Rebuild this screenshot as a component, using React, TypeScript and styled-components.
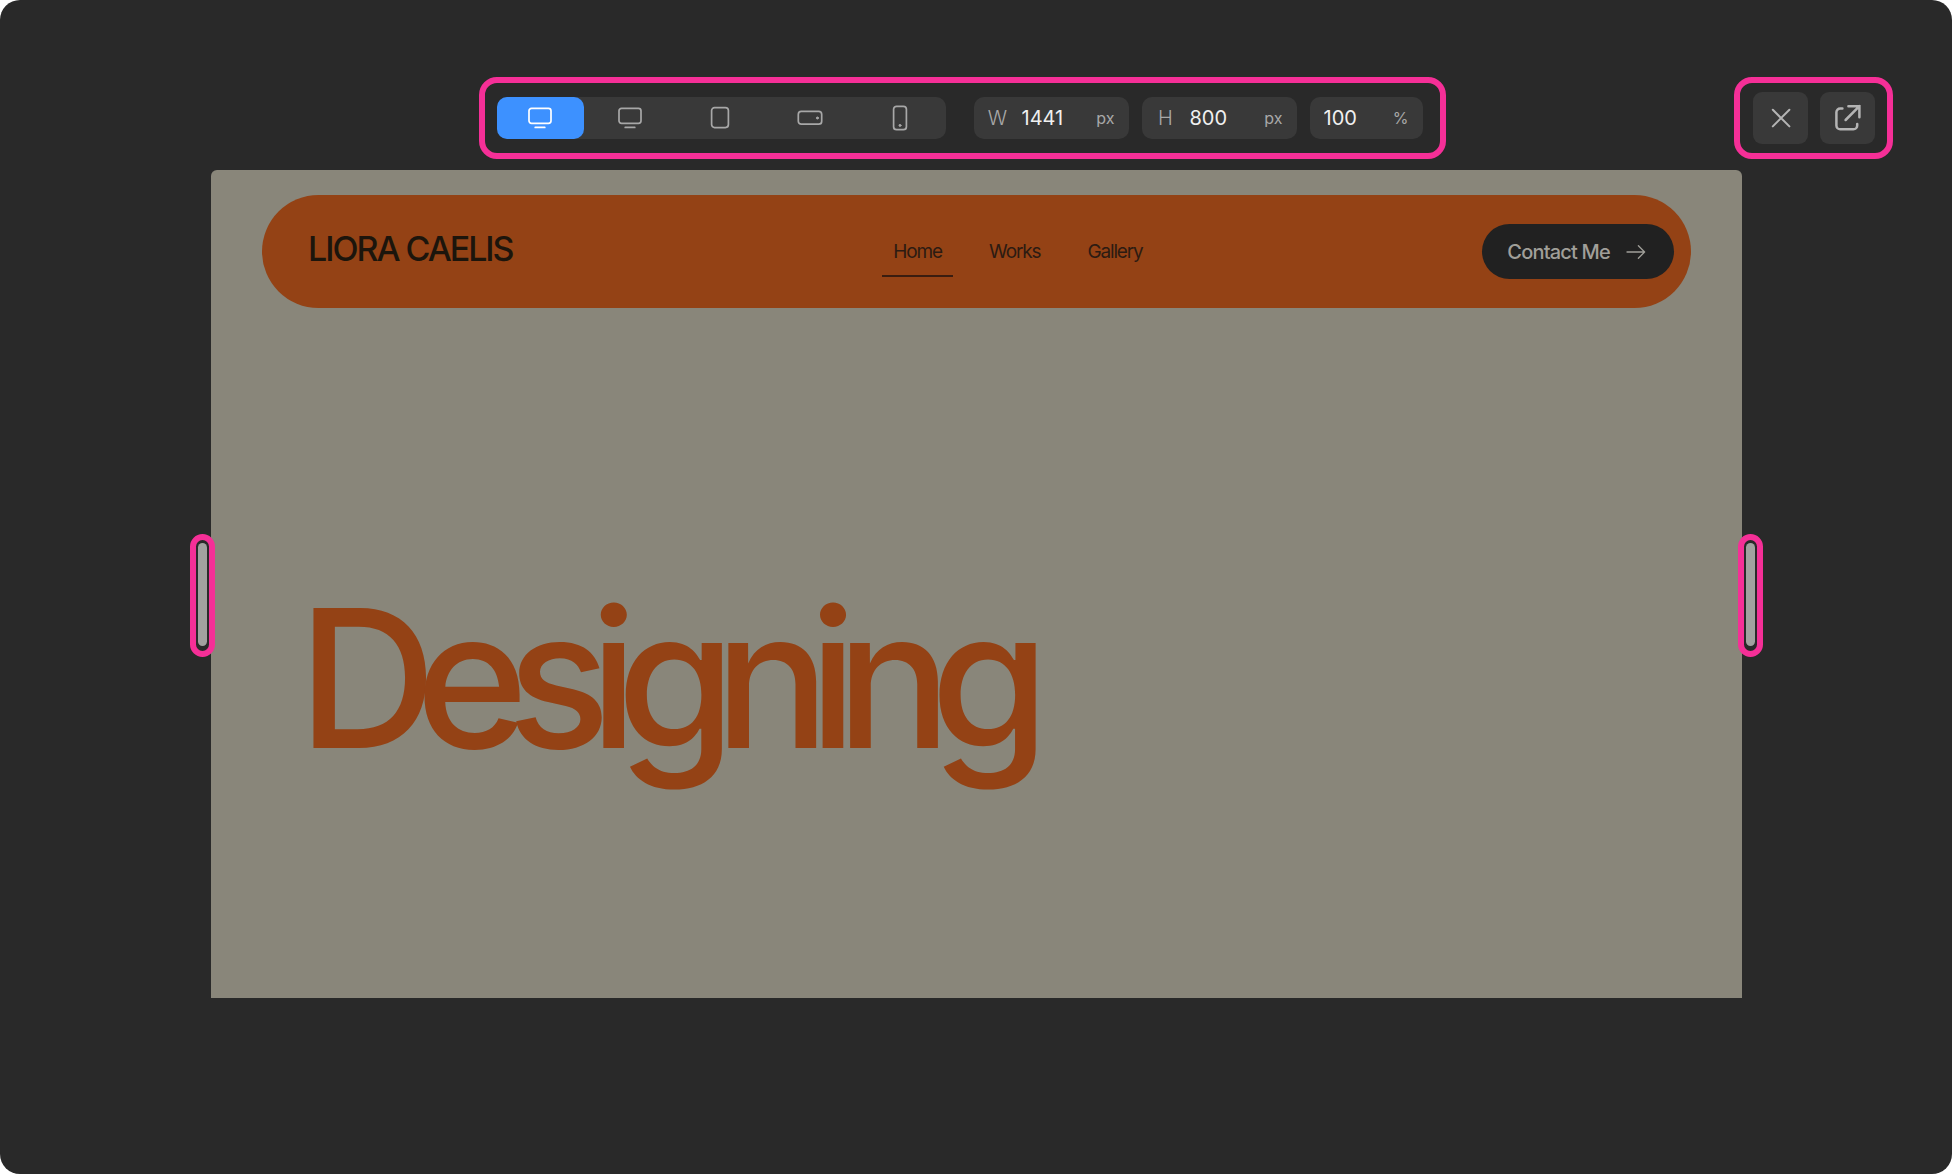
import React, { useState } from "react";
import styled, { createGlobalStyle } from "styled-components";

const color = {
  shell: "#292929",
  control: "#393939",
  accent: "#3d91ff",
  highlight: "#f52f97",
  text: "#f0f0f0",
  muted: "#a8a8a8",
  page: "#89867a",
  brand: "#944215",
  ink: "#1c150c",
};

const tight = "-0.06em";
const overlapping = "-0.11em";

const GlobalStyle = createGlobalStyle`
  *, *::before, *::after { box-sizing: border-box; }
  body {
    margin: 0;
    background: #fff;
    font-family: Inter, "Liberation Sans", sans-serif;
  }
  button, input { font: inherit; color: inherit; }
`;

const Shell = styled.main`
  display: flex;
  flex-direction: column;
  min-height: 100vh;
  padding-top: 77px;
  border-radius: 20px;
  background: ${color.shell};
`;

const TopBar = styled.header`
  display: grid;
  grid-template-columns: 1fr auto 1fr;
  align-items: center;
  padding: 0 59px 0 31px;
`;

const Highlight = styled.div<{ $gap: number }>`
  display: flex;
  align-items: center;
  gap: ${(p) => p.$gap}px;
  height: 82px;
  border: 6px solid ${color.highlight};
  border-radius: 18px;
`;

const Toolbar = styled(Highlight)`
  grid-column: 2;
  padding: 0 17px 0 12px;
`;

const Actions = styled(Highlight)`
  grid-column: 3;
  justify-self: end;
  padding: 0 12px 0 13px;
`;

const Devices = styled.div`
  display: flex;
  gap: 3px;
  height: 42px;
  padding-right: 2px;
  margin-right: 15px;
  border-radius: 10px;
  background: ${color.control};
`;

const DeviceButton = styled.button<{ $active: boolean }>`
  display: grid;
  place-items: center;
  width: 87px;
  padding: 0;
  border: 0;
  border-radius: 10px;
  cursor: pointer;
  color: ${(p) => (p.$active ? "#fff" : color.muted)};
  background: ${(p) => (p.$active ? color.accent : "transparent")};
`;

const Field = styled.label<{ $width: number }>`
  display: flex;
  align-items: center;
  gap: 14px;
  width: ${(p) => p.$width}px;
  height: 42px;
  padding: 0 14px;
  border-radius: 10px;
  background: ${color.control};
  color: ${color.muted};
`;

const FieldName = styled.span`
  width: 20px;
  font-size: 20px;
  font-weight: 300;
  text-align: center;
`;

const FieldInput = styled.input`
  flex: 1;
  min-width: 0;
  padding: 0;
  border: 0;
  outline: 0;
  background: none;
  color: ${color.text};
  font-size: 20px;
  line-height: 24px;
`;

const Unit = styled.span`
  font-size: 16px;
`;

const ActionButton = styled.button`
  display: grid;
  place-items: center;
  width: 55px;
  height: 52px;
  padding: 0;
  border: 0;
  border-radius: 9px;
  cursor: pointer;
  background: ${color.control};
  color: #b4b4b4;
`;

const Stage = styled.section`
  position: relative;
  margin: 11px 210px 0 211px;
`;

const Page = styled.article`
  min-height: 828px;
  padding: 25px 51px;
  border-radius: 6px 6px 0 0;
  background: ${color.page};
`;

const SiteNav = styled.nav`
  display: grid;
  grid-template-columns: 1fr auto 1fr;
  align-items: center;
  height: 113px;
  padding: 0 17px 0 46px;
  border-radius: 57px;
  background: ${color.brand};
`;

const Brand = styled.a`
  padding-bottom: 6px;
  color: ${color.ink};
  font-size: 34px;
  line-height: 40px;
  font-weight: 500;
  letter-spacing: ${tight};
  text-decoration: none;
  white-space: nowrap;
`;

const Links = styled.div`
  display: flex;
  gap: 25px;
  margin-left: 54px;
`;

const NavLink = styled.a<{ $current?: boolean }>`
  padding: 12px 11px 10px;
  border-bottom: 2px solid ${(p) => (p.$current ? "#3a1d10" : "transparent")};
  color: #2c1b12;
  font-size: 19px;
  line-height: 26px;
  letter-spacing: ${tight};
  text-decoration: none;
`;

const Contact = styled.button`
  display: flex;
  align-items: center;
  justify-self: end;
  gap: 16px;
  height: 55px;
  padding: 0 28px 0 25px;
  border: 0;
  border-radius: 28px;
  cursor: pointer;
  background: #212121;
  color: #a09f99;
  font-size: 20px;
  font-weight: 500;
  letter-spacing: -0.04em;
  white-space: nowrap;
`;

const Headline = styled.h1`
  margin: 254px 0 0 36px;
  color: ${color.brand};
  font-size: 192px;
  line-height: 232px;
  font-weight: 500;
  letter-spacing: ${overlapping};
`;

const Handle = styled.button<{ $side: "left" | "right" }>`
  position: absolute;
  top: 364px;
  ${(p) => p.$side}: -21px;
  display: flex;
  justify-content: center;
  width: 25px;
  height: 123px;
  padding: 3px 0;
  border: 6px solid ${color.highlight};
  border-radius: 13px;
  background: ${color.shell};
  cursor: ew-resize;
`;

const Grip = styled.span`
  width: 9px;
  height: 103px;
  border-radius: 5px;
  background: #a1a19f;
`;

const iconProps = {
  fill: "none",
  stroke: "currentColor",
  strokeWidth: 1.7,
  strokeLinecap: "round" as const,
  strokeLinejoin: "round" as const,
  "aria-hidden": true,
};

const Monitor = () => (
  <svg width="26" height="26" viewBox="0 0 26 26" {...iconProps}>
    <rect x="2" y="3.3" width="22" height="15" rx="2.5" />
    <path d="M8.2 22.4h9.6" />
  </svg>
);

const Tablet = () => (
  <svg width="26" height="26" viewBox="0 0 26 26" {...iconProps}>
    <rect x="4.6" y="2.6" width="16.8" height="20" rx="3" />
  </svg>
);

const PhoneLandscape = () => (
  <svg width="26" height="26" viewBox="0 0 26 26" {...iconProps}>
    <rect x="1.3" y="6.4" width="23.4" height="12.8" rx="3" />
    <circle cx="20.4" cy="13" r="1" fill="currentColor" strokeWidth="1" />
  </svg>
);

const Phone = () => (
  <svg width="26" height="26" viewBox="0 0 26 26" {...iconProps}>
    <rect x="6.6" y="1.3" width="12.8" height="23.4" rx="3" />
    <circle cx="13" cy="20.4" r="1" fill="currentColor" strokeWidth="1" />
  </svg>
);

const Close = () => (
  <svg width="26" height="26" viewBox="0 0 26 26" {...iconProps} strokeWidth={2}>
    <path d="M4.8 4.8l16.6 16.6M21.4 4.8L4.8 21.4" />
  </svg>
);

const OpenExternal = () => (
  <svg width="30" height="30" viewBox="0 0 30 30" {...iconProps} strokeWidth={2.5}>
    <path
      d="M9.4 5.4H7.2a3.8 3.8 0 0 0-3.8 3.8v13.2a3.8 3.8 0 0 0 3.8 3.8h13.2a3.8 3.8 0 0 0 3.8-3.8V21"
    />
    <path d="M12.6 17L26.4 3.2M15.4 3.2h11v11" strokeLinejoin="miter" />
  </svg>
);

const Arrow = () => (
  <svg width="20" height="16" viewBox="0 0 20 16" {...iconProps} strokeWidth={1.3}>
    <path d="M1 8h17.6M12.4 1.8L18.6 8l-6.2 6.2" />
  </svg>
);

const devices = [
  { name: "Desktop", Icon: Monitor },
  { name: "Laptop", Icon: Monitor },
  { name: "Tablet", Icon: Tablet },
  { name: "Phone landscape", Icon: PhoneLandscape },
  { name: "Phone portrait", Icon: Phone },
];

const fields = [
  { label: "Width", short: "W", value: "1441", unit: "px", width: 155 },
  { label: "Height", short: "H", value: "800", unit: "px", width: 155 },
  { label: "Zoom", short: "", value: "100", unit: "%", width: 113 },
];

export default function App() {
  const [active, setActive] = useState(0);

  return (
    <>
      <GlobalStyle />
      <Shell>
        <TopBar>
          <Toolbar $gap={13}>
            <Devices role="group" aria-label="Device">
              {devices.map(({ name, Icon }, i) => (
                <DeviceButton
                  key={name}
                  type="button"
                  aria-label={name}
                  aria-pressed={i === active}
                  $active={i === active}
                  onClick={() => setActive(i)}
                >
                  <Icon />
                </DeviceButton>
              ))}
            </Devices>
            {fields.map((f) => (
              <Field key={f.label} $width={f.width}>
                {f.short && <FieldName>{f.short}</FieldName>}
                <FieldInput aria-label={f.label} inputMode="numeric" defaultValue={f.value} />
                <Unit>{f.unit}</Unit>
              </Field>
            ))}
          </Toolbar>
          <Actions $gap={12}>
            <ActionButton type="button" aria-label="Close preview">
              <Close />
            </ActionButton>
            <ActionButton type="button" aria-label="Open in new tab">
              <OpenExternal />
            </ActionButton>
          </Actions>
        </TopBar>

        <Stage>
          <Page>
            <SiteNav>
              <Brand href="#">LIORA CAELIS</Brand>
              <Links>
                <NavLink href="#home" $current aria-current="page">Home</NavLink>
                <NavLink href="#works">Works</NavLink>
                <NavLink href="#gallery">Gallery</NavLink>
              </Links>
              <Contact type="button">
                Contact Me
                <Arrow />
              </Contact>
            </SiteNav>
            <Headline>Designing</Headline>
          </Page>
          <Handle type="button" $side="left" aria-label="Resize from the left">
            <Grip />
          </Handle>
          <Handle type="button" $side="right" aria-label="Resize from the right">
            <Grip />
          </Handle>
        </Stage>
      </Shell>
    </>
  );
}
